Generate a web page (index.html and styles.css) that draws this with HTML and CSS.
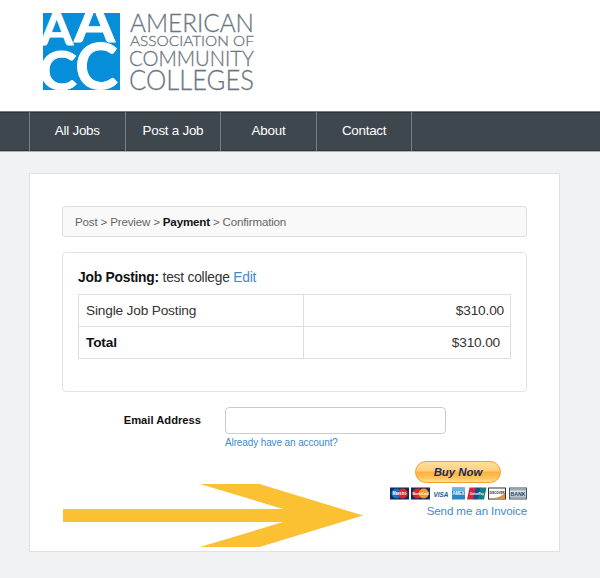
FILE: index.html
```
<!DOCTYPE html>
<html lang="en">
<head>
    <meta charset="UTF-8">
    <meta name="viewport" content="width=device-width, initial-scale=1.0">
    <title>AACC Jobs - Payment</title>
    <link rel="stylesheet" href="styles.css">
</head>
<body>
    <header class="header">
        <svg class="logo" width="214" height="82" viewBox="0 0 214 82" role="img" aria-label="American Association of Community Colleges">
            <clipPath id="mark"><rect x="1" y="1" width="77" height="77"/></clipPath>
            <rect x="1" y="1" width="77" height="77" fill="#068fd8"/>
            <g class="logo-letters" clip-path="url(#mark)">
                <text x="-2" y="33" font-size="45" textLength="33" lengthAdjust="spacingAndGlyphs">A</text>
                <text x="32" y="30" font-size="56" textLength="41" lengthAdjust="spacingAndGlyphs">A</text>
                <text x="-3" y="78" font-size="54" textLength="38" lengthAdjust="spacingAndGlyphs">C</text>
                <text x="33" y="77" font-size="63" textLength="43" lengthAdjust="spacingAndGlyphs">C</text>
            </g>
            <g class="logo-words">
                <text x="88" y="19.5" font-size="25.5" textLength="124" lengthAdjust="spacingAndGlyphs">AMERICAN</text>
                <text x="88" y="34" font-size="14.5" textLength="124" lengthAdjust="spacingAndGlyphs">ASSOCIATION OF</text>
                <text x="87" y="54" font-size="22" textLength="125" lengthAdjust="spacingAndGlyphs">COMMUNITY</text>
                <text x="87" y="78" font-size="27.5" textLength="125" lengthAdjust="spacingAndGlyphs">COLLEGES</text>
            </g>
        </svg>
    </header>

    <nav class="nav">
        <a class="nav-link" href="#">All Jobs</a>
        <a class="nav-link" href="#">Post a Job</a>
        <a class="nav-link" href="#">About</a>
        <a class="nav-link" href="#">Contact</a>
    </nav>

    <main class="card">
        <div class="steps">Post &gt; Preview &gt; <b>Payment</b> &gt; Confirmation</div>

        <section class="panel">
            <h1 class="panel-title"><b>Job Posting:</b> test college <a href="#">Edit</a></h1>
            <table class="prices">
                <tr>
                    <td>Single Job Posting</td>
                    <td class="amount">$310.00</td>
                </tr>
                <tr>
                    <td><b>Total</b></td>
                    <td class="amount amount-total">$310.00</td>
                </tr>
            </table>
        </section>

        <form class="email">
            <label class="email-label" for="email">Email Address</label>
            <div class="email-field">
                <input class="email-input" type="text" id="email">
                <a class="email-help" href="#">Already have an account?</a>
            </div>
        </form>

        <div class="checkout">
            <svg class="arrow" width="300" height="63" viewBox="0 0 300 63">
                <path d="M0 25H220L137 0H196.500L300 31.500L196.500 63H137L220 38H0Z" fill="#fcc133"/>
            </svg>
            <div class="pay">
                <button class="buy" type="button">Buy Now</button>
                <svg class="pay-cards" width="137" height="13" viewBox="0 0 137 13">
                    <!-- Maestro -->
                    <rect x="0" y="0.500" width="19" height="12" fill="#14295f"/>
                    <circle cx="6.500" cy="6.500" r="5" fill="#0878cc"/>
                    <circle cx="12.700" cy="6.500" r="5" fill="#e0232c"/>
                    <text class="brand" x="2.500" y="8.300" font-size="4.500" textLength="14" lengthAdjust="spacingAndGlyphs">Maestro</text>
                    <!-- MasterCard -->
                    <rect x="21" y="0.500" width="19" height="12" fill="#14295f"/>
                    <circle cx="27.500" cy="6.500" r="5" fill="#e0232c"/>
                    <circle cx="33.700" cy="6.500" r="5" fill="#f79a25"/>
                    <text class="brand" x="22.500" y="8.300" font-size="4" textLength="16" lengthAdjust="spacingAndGlyphs">MasterCard</text>
                    <!-- Visa -->
                    <text class="brand-visa" x="43.500" y="9.500" font-size="7.500" textLength="15" lengthAdjust="spacingAndGlyphs">VISA</text>
                    <!-- American Express -->
                    <rect x="62" y="0.500" width="13" height="12" fill="#2a86c8"/>
                    <path d="M62 0.500H75V4H62Z" fill="#66b5e4"/>
                    <text class="brand" x="62.500" y="8.200" font-size="4.500" textLength="12" lengthAdjust="spacingAndGlyphs">AMEX</text>
                    <!-- UnionPay -->
                    <path d="M79.500 0.500H86L83.500 12.500H77Z" fill="#d9233c"/>
                    <path d="M85.500 0.500H91L88.500 12.500H83Z" fill="#12508c"/>
                    <path d="M90.500 0.500H96.500L94 12.500H88Z" fill="#128080"/>
                    <text class="brand" x="80" y="8" font-size="4" textLength="14" lengthAdjust="spacingAndGlyphs">UnionPay</text>
                    <!-- Discover -->
                    <rect x="98.500" y="1" width="17" height="11" fill="#fff" stroke="#34332f"/>
                    <path d="M115 6V11.500H103Q111 10 115 6Z" fill="#ef8c32"/>
                    <text class="brand-dark" x="99.500" y="6.500" font-size="4" textLength="15" lengthAdjust="spacingAndGlyphs">DISCOVER</text>
                    <!-- Bank -->
                    <rect x="119.500" y="1" width="17" height="11" fill="#d9e1e9" stroke="#4b5157"/>
                    <path d="M120 1.500H136V3.500H120ZM120 9.500H136V11.500H120Z" fill="#9babba"/>
                    <text class="brand-bank" x="120.500" y="8.500" font-size="5.500" textLength="15" lengthAdjust="spacingAndGlyphs">BANK</text>
                </svg>
                <a class="invoice" href="#">Send me an Invoice</a>
            </div>
        </div>
    </main>
</body>
</html>
```
FILE: styles.css
```
* {
    box-sizing: border-box;
}

body {
    margin: 0;
    background-color: #f1f2f4;
    color: #333;
    font-family: "Liberation Sans", Arial, sans-serif;
}

a {
    color: #428bca;
    text-decoration: none;
}

b {
    color: #111;
}

.header {
    height: 111px;
    padding: 12px 0 0 42px;
    background-color: #fff;
}

.logo {
    display: block;
}

.logo-letters {
    fill: #fff;
    stroke: #fff;
    stroke-width: 0.8px;
    font-family: Lato, sans-serif;
    font-weight: 700;
}

.logo-words {
    fill: #6b7681;
    stroke: #6b7681;
    stroke-width: 0.3px;
    font-family: Lato, sans-serif;
    font-weight: 300;
}

.nav {
    display: flex;
    height: 41px;
    padding-left: 29px;
    background-color: #3e464e;
    border-top: 1px solid #777d83;
    border-bottom: 1px solid #aeb2b6;
    box-shadow: inset 0 1px #2c343c, inset 0 -1px #2c343c;
}

.nav-link {
    width: 95.6px;
    border-left: 1px solid #767c82;
    color: #fff;
    font-size: 13.4px;
    letter-spacing: -0.25px;
    line-height: 38px;
    text-align: center;
}

.nav-link:last-child {
    width: 96.6px;
    border-right: 1px solid #767c82;
}

.nav-link:hover {
    background-color: #2c343c;
}

.card {
    width: 531px;
    height: 379px;
    margin: 21px 0 0 29px;
    padding: 32px 32px 0;
    background-color: #fff;
    border: 1px solid #e0e1e3;
}

.steps {
    height: 31px;
    padding-left: 12px;
    background-color: #f9f9f9;
    border: 1px solid #dedede;
    border-radius: 3px;
    color: #666;
    font-size: 11.6px;
    letter-spacing: -0.18px;
    line-height: 29px;
}

.panel {
    height: 140px;
    margin-top: 15px;
    padding: 16px 15px 0;
    border: 1px solid #e3e3e3;
    border-radius: 4px;
}

.panel-title {
    margin: 0;
    font-size: 13.8px;
    font-weight: normal;
    letter-spacing: -0.22px;
    line-height: 18px;
}

.prices {
    width: 100%;
    margin-top: 7px;
    border-collapse: collapse;
    table-layout: fixed;
    font-size: 13.7px;
    letter-spacing: -0.18px;
}

.prices td {
    height: 32px;
    padding: 0 6px 0 7px;
    border: 1px solid #ddd;
}

.prices td:first-child {
    width: 225px;
}

.prices .amount {
    text-align: right;
}

.prices .amount-total {
    padding-right: 10px;
}

.email {
    display: flex;
    margin-top: 15px;
}

.email-label {
    width: 139px;
    color: #111;
    font-size: 11.2px;
    font-weight: bold;
    line-height: 27px;
    text-align: right;
}

.email-field {
    display: flex;
    flex-direction: column;
    margin-left: 24px;
}

.email-input {
    width: 221px;
    height: 27px;
    border: 1px solid #ccc;
    border-radius: 4px;
}

.email-help {
    margin-top: 2px;
    font-size: 10px;
    letter-spacing: -0.12px;
    line-height: 14px;
}

.checkout {
    display: flex;
    justify-content: space-between;
    align-items: flex-start;
    margin-top: 11px;
    padding-left: 1px;
}

.arrow {
    margin-top: 23px;
}

.pay {
    display: flex;
    flex-direction: column;
    align-items: flex-end;
}

.buy {
    width: 86px;
    height: 22px;
    margin-right: 26px;
    padding: 0;
    background: linear-gradient(#ffdf9e, #ffd07a 45%, #ffb13c 50%, #ffc45c 80%, #ffe0a0);
    border: 1px solid #f4a12c;
    border-radius: 11px;
    color: #162a5c;
    font-family: inherit;
    font-size: 11.4px;
    font-style: italic;
    font-weight: bold;
    line-height: 20px;
    cursor: pointer;
}

.pay-cards {
    margin-top: 4px;
    font-family: "Liberation Sans", Arial, sans-serif;
    font-weight: bold;
}

.brand {
    fill: #fff;
}

.brand-visa {
    fill: #17569b;
    font-style: italic;
}

.brand-dark {
    fill: #222;
}

.brand-bank {
    fill: #20395c;
}

.invoice {
    margin-top: 3px;
    font-size: 11.6px;
    letter-spacing: -0.12px;
    line-height: 16px;
}
```
